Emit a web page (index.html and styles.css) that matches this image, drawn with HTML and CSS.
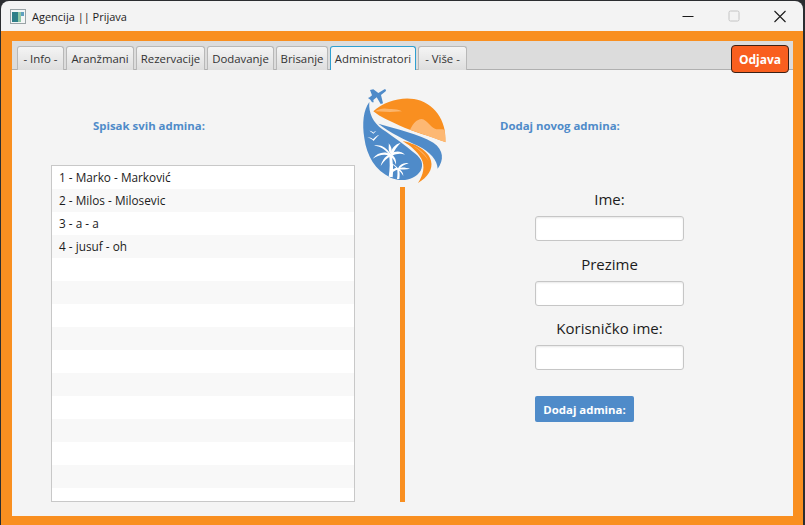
FILE: index.html
```html
<!DOCTYPE html>
<html lang="sr">
<head>
    <meta charset="UTF-8">
    <title>Agencija || Prijava</title>
    <link rel="stylesheet" href="styles.css">
</head>
<body>
    <div class="prozor">

        <div class="naslov-traka">
            <svg class="app-ikona" viewBox="0 0 16 15">
                <rect x="0.5" y="0.5" width="15" height="14" fill="#f4f6f6" stroke="#9aa3a6"/>
                <rect x="2" y="3" width="6" height="10" fill="#2f7f88"/>
                <rect x="8" y="3" width="3" height="10" fill="#8fc7a5"/>
                <rect x="11" y="3" width="3" height="4" fill="#5fa0c0"/>
            </svg>
            <span class="naslov">Agencija || Prijava</span>
            <div class="kontrole">
                <svg viewBox="0 0 46 31"><path d="M17.500 15.500h11" stroke="#1a1a1a" stroke-width="1.200"/></svg>
                <svg viewBox="0 0 46 31"><rect x="18" y="10" width="10" height="10" rx="1.500" fill="none" stroke="#c4c4c4"/></svg>
                <svg viewBox="0 0 46 31"><path d="M17.500 10l11 11M28.500 10l-11 11" stroke="#1a1a1a" stroke-width="1.100"/></svg>
            </div>
        </div>

        <div class="okvir">
            <div class="panel">

                <div class="tabovi">
                    <div class="tab">- Info -</div>
                    <div class="tab">Aranžmani</div>
                    <div class="tab">Rezervacije</div>
                    <div class="tab">Dodavanje</div>
                    <div class="tab">Brisanje</div>
                    <div class="tab aktivan">Administratori</div>
                    <div class="tab">- Više -</div>
                    <button class="odjava">Odjava</button>
                </div>

                <div class="sadrzaj">

                    <div class="lijevo">
                        <h2 class="podnaslov spisak">Spisak svih admina:</h2>
                        <ul class="lista">
                            <li>1 - Marko - Marković</li>
                            <li>2 - Milos - Milosevic</li>
                            <li>3 - a - a</li>
                            <li>4 - jusuf - oh</li>
                            <li></li><li></li><li></li><li></li><li></li>
                            <li></li><li></li><li></li><li></li><li></li><li></li>
                        </ul>
                    </div>

                    <div class="sredina">
                        <svg class="logo" viewBox="0 0 330 360">
                            <!-- sunce -->
                            <path fill="#f98f20" d="M70 94C100 66 150 50 192 57C250 66 292 122 286 186C240 168 190 155 150 137C120 124 92 112 70 94Z"/>
                            <path fill="#fdb873" d="M180 149C190 130 200 118 215 117C232 120 240 140 255 146C265 150 275 146 284 150L287 187C250 172 215 162 180 149Z"/>
                            <path fill="#fbb56d" d="M75 94C90 84 105 84 118 87C130 86 145 88 156 94L120 96Z"/>
                            <!-- plava mrlja -->
                            <path fill="#4f8bc9" d="M58 66C40 90 36 130 43 175C50 228 76 272 122 293C155 306 192 302 212 272C222 252 214 236 197 222C165 196 127 168 97 148C70 128 55 100 58 66Z"/>
                            <!-- trake -->
                            <path fill="#4f8bc9" d="M85 131C140 148 205 160 250 188C282 210 282 240 263 266C262 240 240 215 205 198C165 180 120 158 85 131Z"/>
                            <path fill="#f98f20" d="M158 183C195 190 236 212 243 242C250 268 232 292 204 309C220 284 226 258 214 236C202 214 182 198 158 183Z"/>
                            <path fill="#fdb873" d="M190 198C210 208 228 222 236 244C228 228 210 212 190 198Z"/>
                            <!-- avion -->
                            <path fill="#4f8bc9" d="M60 30L70 28L85 39L101 29C106 26 110 29 107 34L93 45L99 70L92 72L80 52L70 60L71 67L66 67L61 59L54 54L59 52L66 46L60 30Z"/>
                            <!-- ptice -->
                            <path fill="#fff" d="M58 152C64 153 68 155 70 158C73 155 75 154 79 153C75 156 72 160 70 161C67 158 63 155 58 152ZM52 172C60 172 66 174 69 178C74 172 80 167 88 164C81 170 75 177 71 183C66 178 60 175 52 172Z"/>
                            <!-- palme -->
                            <g fill="#fff">
                                <path d="M117 222C120 245 120 268 116 290L128 292C131 268 129 245 124 222Z"/>
                                <path d="M122 222C108 200 90 192 72 197C90 198 105 207 118 224Z"/>
                                <path d="M122 222C102 212 82 218 68 236C86 224 104 222 118 227Z"/>
                                <path d="M122 222C110 225 97 238 92 258C102 242 112 234 122 228Z"/>
                                <path d="M122 222C124 205 136 192 152 188C142 198 133 210 128 224Z"/>
                                <path d="M122 222C136 212 152 212 165 224C150 219 138 222 127 227Z"/>
                                <path d="M122 222C134 228 140 240 138 254C134 242 128 234 120 228Z"/>
                                <path d="M122 222C112 210 118 198 116 190C124 198 126 210 126 222Z"/>
                                <path d="M141 265C143 275 143 285 141 297L148 297C150 285 149 275 146 265Z"/>
                                <path d="M144 265C134 254 126 250 122 252C130 254 136 259 141 268Z"/>
                                <path d="M144 265C134 262 124 268 122 284C128 274 136 270 143 269Z"/>
                                <path d="M144 265C150 254 160 247 176 250C164 253 154 259 147 268Z"/>
                                <path d="M144 265C156 260 170 264 180 266C168 268 156 268 146 269Z"/>
                                <path d="M144 265C154 270 160 278 160 288C155 279 150 274 143 270Z"/>
                            </g>
                        </svg>
                        <div class="linija"></div>
                    </div>

                    <div class="desno">
                        <h2 class="podnaslov dodaj">Dodaj novog admina:</h2>
                        <form class="forma">
                            <label class="polje">Ime:<input type="text"></label>
                            <label class="polje">Prezime<input type="text"></label>
                            <label class="polje">Korisničko ime:<input type="text"></label>
                            <button type="button" class="dodaj-dugme">Dodaj admina:</button>
                        </form>
                    </div>

                </div>
            </div>
        </div>
    </div>
</body>
</html>
```

FILE: styles.css
```css
* {
    box-sizing: border-box;
}

html, body {
    height: 100%;
}

body {
    margin: 0;
    padding: 1px 2px 0 1px;
    overflow: hidden;
    background-color: #2b2d30;
    font-family: "Open Sans", "Noto Sans", sans-serif;
    color: #1c1c1c;
}

.prozor {
    height: 524px;
    display: flex;
    flex-direction: column;
    border-radius: 8px 8px 0 0;
    overflow: hidden;
}

.naslov-traka {
    height: 30px;
    flex: none;
    display: flex;
    align-items: center;
    padding-left: 9px;
    background-color: #f3f3f3;
}

.app-ikona {
    width: 16px;
    height: 15px;
}

.naslov {
    margin-left: 6px;
    font-size: 11px;
}

.kontrole {
    margin-left: auto;
    display: flex;
}

.kontrole svg {
    width: 46px;
    height: 31px;
    display: block;
}

.okvir {
    flex: 1;
    padding: 10px 10px 9px 11px;
    background-color: #f98f20;
    min-height: 0;
}

.panel {
    height: 100%;
    display: flex;
    flex-direction: column;
    background-color: #f4f4f4;
}

.tabovi {
    height: 29px;
    flex: none;
    display: grid;
    grid-template-columns: 47px 68px 69px 67px 52px 86px 49px 1fr;
    align-items: end;
    gap: 2px;
    padding: 0 4px 0 5px;
    background-color: #dcdcdc;
    border-bottom: 1px solid #b0b0b0;
}

.tab {
    height: 24px;
    margin-bottom: -1px;
    display: flex;
    align-items: center;
    justify-content: center;
    white-space: nowrap;
    font-size: 11.400px;
    color: #333;
    background: linear-gradient(#f4f4f4, #dedede);
    border: 1px solid #b8b8b8;
    border-bottom: none;
    border-radius: 3px 3px 0 0;
}

.tab.aktivan {
    background: #f4f4f4;
    border: 1px solid #2f9fd0;
    border-bottom: none;
}

.odjava {
    margin-bottom: -4px;
    justify-self: end;
    width: 58px;
    height: 28px;
    padding: 0;
    font-family: inherit;
    font-size: 12px;
    font-weight: 700;
    color: #fff;
    background-color: #f95f1f;
    border: 1px solid #3a2015;
    border-radius: 4px;
}

.sadrzaj {
    flex: 1;
    display: flex;
    padding-left: 39px;
    min-height: 0;
}

.podnaslov {
    margin: 0;
    font-size: 11.400px;
    font-weight: 700;
    color: #4f8bc9;
}

.lijevo {
    width: 304px;
    flex: none;
}

.spisak {
    padding: 48px 0 0 42px;
    height: 95px;
}

.lista {
    margin: 0;
    padding: 0;
    list-style: none;
    height: 337px;
    overflow: hidden;
    background-color: #fff;
    border: 1px solid #c8c8c8;
}

.lista li {
    height: 23px;
    padding-left: 7px;
    font-size: 11.800px;
    line-height: 23px;
    background-color: #fff;
}

.lista li:nth-child(even) {
    background-color: #f8f8f8;
}

.sredina {
    width: 110px;
    flex: none;
    margin-left: -5px;
    margin-top: 10px;
    display: flex;
    flex-direction: column;
    align-items: flex-start;
}

.logo {
    width: 110px;
    height: 120px;
    flex: none;
    margin-bottom: -13px;
}

.linija {
    width: 5px;
    height: 315px;
    margin-left: 50px;
    background-color: #f98f20;
}

.desno {
    flex: 1;
    padding-left: 40px;
}

.dodaj {
    padding-top: 48px;
    height: 115px;
}

.forma {
    width: 149px;
    margin-left: 35px;
    display: flex;
    flex-direction: column;
}

.polje {
    height: 64.500px;
    padding-top: 4px;
    display: flex;
    flex-direction: column;
    align-items: center;
    gap: 7px;
    font-size: 15px;
    line-height: 20px;
}

.polje input {
    width: 149px;
    height: 25px;
    flex: none;
    padding: 0 6px;
    background-color: #fff;
    border: 1px solid #c6c6c6;
    border-radius: 3px;
    box-shadow: inset 0 1px 2px #e8e8e8;
}

.dodaj-dugme {
    width: 99px;
    height: 26px;
    margin-top: 17.500px;
    padding: 0;
    font-family: inherit;
    font-size: 11.400px;
    font-weight: 700;
    color: #fff;
    background-color: #4f8bc9;
    border: none;
    border-radius: 2px;
}
```
